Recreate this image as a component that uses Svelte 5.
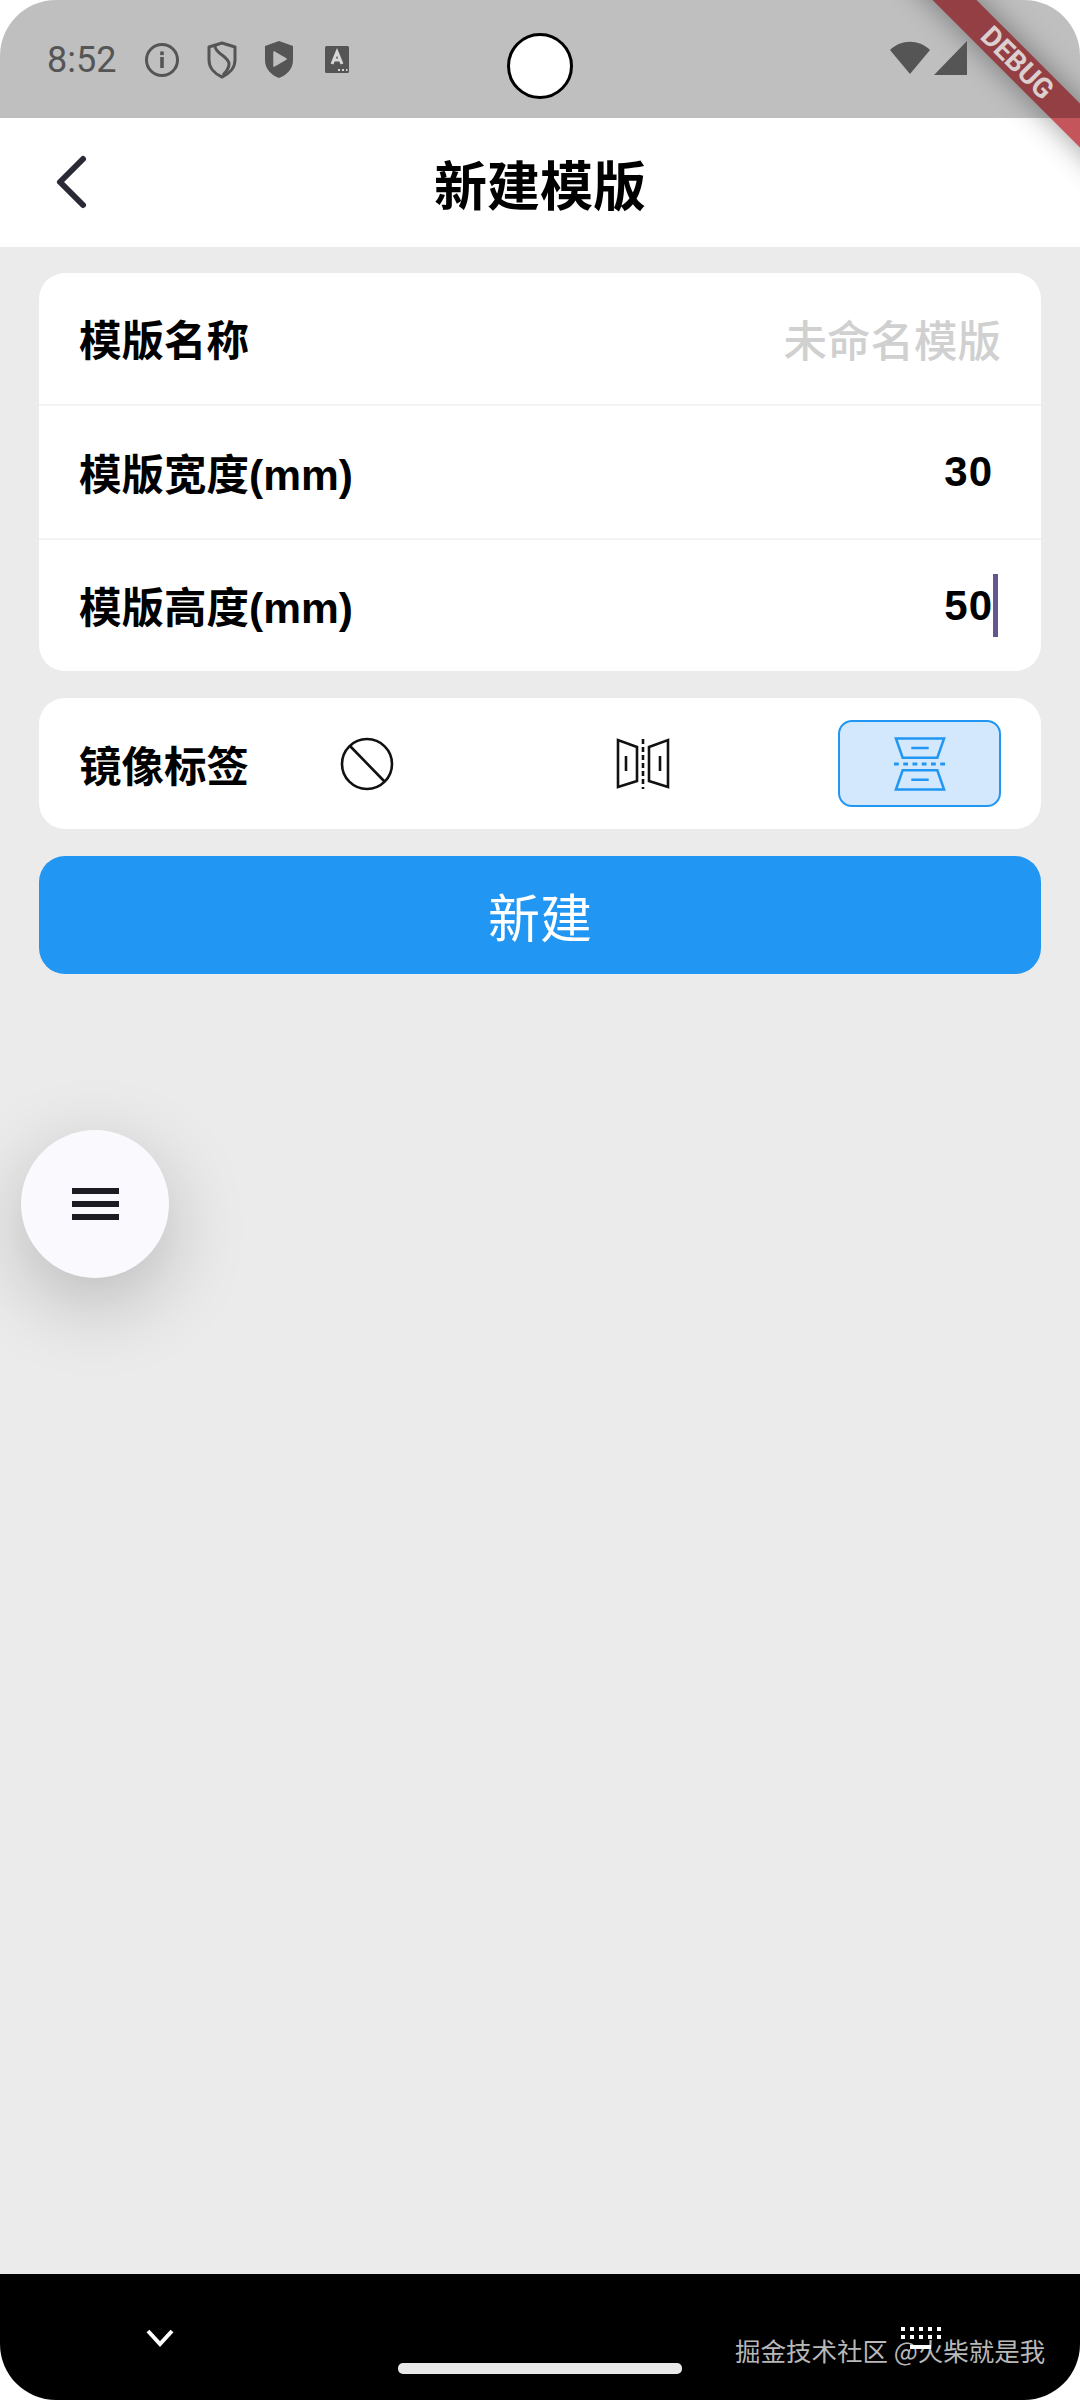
<script lang="ts">
  const fields = [
    { label: "模版名称", placeholder: "未命名模版" },
    { label: "模版宽度(mm)", value: "30" },
    { label: "模版高度(mm)", value: "50", focused: true }
  ];
</script>

<div class="screen">
  <div class="statusbar">
    <span class="time">8:52</span>
    <div class="status-icons">
      <svg width="36" height="36" viewBox="0 0 36 36">
        <circle cx="18" cy="18" r="15.5" fill="none" stroke="#555" stroke-width="3" />
        <rect x="16.2" y="15" width="3.6" height="11" fill="#555" />
        <rect x="16.2" y="9.5" width="3.6" height="3.6" fill="#555" />
      </svg>
      <svg width="30" height="38" viewBox="0 0 30 38">
        <path d="M15 2 L28 6 V19 C28 27 22 33 15 36 C8 33 2 27 2 19 V6 Z" fill="none" stroke="#555" stroke-width="3" stroke-linejoin="round" />
        <path d="M8 5 C8 13 22 15 22 23 C22 27 19 31 16 34" fill="none" stroke="#555" stroke-width="3" />
      </svg>
      <svg width="30" height="38" viewBox="0 0 30 38">
        <path d="M15 0 L29 5 V19 C29 28 23 34 15 37 C7 34 1 28 1 19 V5 Z" fill="#555" />
        <path d="M10 11 L22 18 L10 25 Z" fill="#bfbfbf" stroke="#bfbfbf" stroke-width="1.5" stroke-linejoin="round" />
      </svg>
      <svg class="a-icon" width="24" height="28" viewBox="0 0 24 28">
        <rect width="24" height="27" rx="1.5" fill="#555" />
        <path d="M7 18 L12 6 L17 18 M8.8 14 H15.2" fill="none" stroke="#d8d8d8" stroke-width="3" />
        <path d="M13 24 H15 M17 24 H19 M21 24 H22.5" stroke="#d8d8d8" stroke-width="2" />
      </svg>
    </div>
    <div class="camera"></div>
    <div class="signal">
      <svg width="40" height="34" viewBox="0 0 40 34">
        <path d="M0 9 C11 -2 29 -2 40 9 L20 33 Z" fill="#555" />
      </svg>
      <svg width="33" height="34" viewBox="0 0 33 34">
        <path d="M33 0 V34 H0 Z" fill="#555" />
      </svg>
    </div>
  </div>

  <header class="appbar">
    <svg class="back" width="40" height="56" viewBox="0 0 40 56">
      <path d="M31 5 L8 28 L31 51" fill="none" stroke="#2a2a35" stroke-width="6" stroke-linecap="round" stroke-linejoin="round" />
    </svg>
    <h1>新建模版</h1>
  </header>

  <main>
    <section class="card">
      {#each fields as f}
        <div class="row">
          <span class="label">{f.label}</span>
          {#if f.placeholder}
            <span class="placeholder">{f.placeholder}</span>
          {:else}
            <span class="value">{f.value}{#if f.focused}<i class="caret"></i>{/if}</span>
          {/if}
        </div>
      {/each}
    </section>

    <section class="card mirror">
      <span class="label mirror-label">镜像标签</span>
      <div class="options">
        <div class="option">
          <svg width="54" height="54" viewBox="0 0 54 54" fill="none" stroke="#111" stroke-width="2.6">
            <circle cx="27" cy="27" r="25" />
            <path d="M10 9 L45 45" />
          </svg>
        </div>
        <div class="option">
          <svg width="54" height="52" viewBox="0 0 54 52" fill="none" stroke="#111" stroke-width="2.6">
            <path d="M21 9 L2 2 V49 L21 43 Z" />
            <path d="M33 9 L52 2 V49 L33 43 Z" />
            <path d="M10 18 V33 M44 18 V33" />
            <path d="M27 1 V51" stroke-dasharray="5 3" />
          </svg>
        </div>
        <div class="option selected">
          <svg width="52" height="55" viewBox="0 0 54 56" fill="none" stroke="#2196f3" stroke-width="2.6">
            <path d="M2 2 H52 L45 22 H9 Z" />
            <path d="M9 35 H45 L52 55 H2 Z" />
            <path d="M18 12 H36 M18 45 H36" />
            <path d="M0 28.5 H54" stroke-width="3" stroke-dasharray="5 4.6" />
          </svg>
        </div>
      </div>
    </section>

    <button class="create">新建</button>
  </main>

  <nav class="navbar">
    <svg class="hide-kb" width="30" height="20" viewBox="0 0 30 20">
      <path d="M3 3 L15 16 L27 3" fill="none" stroke="#fff" stroke-width="4" />
    </svg>
    <div class="pill"></div>
    <span class="watermark">掘金技术社区 @火柴就是我</span>
    <svg class="kb" width="42" height="24" viewBox="0 0 42 24">
      <path d="M1 3 H41 M1 11 H41" stroke="#fff" stroke-width="4" stroke-dasharray="4 5" />
      <path d="M10 21 H31" stroke="#fff" stroke-width="4" />
    </svg>
  </nav>

  <div class="ribbon"></div>
  <span class="ribbon-text">DEBUG</span>

  <button class="fab" aria-label="菜单">
    <span></span><span></span><span></span>
  </button>
</div>

<style>
  :global(body) {
    background: #fff;
  }
  .screen {
    position: relative;
    width: 1080px;
    height: 2400px;
    display: flex;
    flex-direction: column;
    overflow: hidden;
    background: #fff;
    border-radius: 56px;
    font-family: "Liberation Sans", "Noto Sans CJK SC", sans-serif;
  }

  .statusbar {
    position: relative;
    z-index: 3;
    height: 118px;
    flex: none;
    display: flex;
    align-items: center;
    justify-content: space-between;
    padding: 0 113px 0 47px;
    box-sizing: border-box;
    background: rgba(0, 0, 0, 0.25);
  }
  .time {
    font: 400 36px Roboto, sans-serif;
    color: #555;
    margin-right: 28px;
    margin-top: 2px;
  }
  .status-icons {
    display: flex;
    align-items: center;
    gap: 27px;
    flex: 1;
    margin-top: 2px;
  }
  .a-icon {
    margin-left: 4px;
  }
  .camera {
    position: absolute;
    left: 507px;
    top: 33px;
    width: 66px;
    height: 66px;
    box-sizing: border-box;
    border: 3px solid #000;
    border-radius: 50%;
    background: #fff;
  }
  .signal {
    display: flex;
    align-items: flex-end;
    gap: 4px;
    margin-top: -2px;
  }

  .appbar {
    position: relative;
    height: 129px;
    flex: none;
    display: flex;
    align-items: center;
    justify-content: center;
    background: #fff;
  }
  .back {
    position: absolute;
    left: 52px;
    top: 36px;
  }
  h1 {
    margin: 0;
    font: 700 53px "Noto Sans CJK SC", sans-serif;
    color: #000;
  }

  main {
    flex: 1;
    display: flex;
    flex-direction: column;
    gap: 27px;
    padding: 26px 39px;
    background: #ebebeb;
  }
  .card {
    background: #fff;
    border-radius: 26px;
    overflow: hidden;
  }
  .row {
    height: 134px;
    box-sizing: border-box;
    display: flex;
    align-items: center;
    justify-content: space-between;
    padding: 0 40px;
    border-bottom: 2px solid #f3f3f3;
  }
  .row:first-child {
    height: 133px;
  }
  .row:last-child {
    height: 131px;
    border-bottom: 0;
  }
  .row .label {
    margin-top: -2px;
  }
  .label {
    font-size: 42.5px;
    font-weight: 700;
    color: #000;
  }
  .placeholder {
    font: 500 43.5px "Noto Sans CJK SC", sans-serif;
    color: #d0d0d0;
  }
  .value {
    position: relative;
    font-size: 42px;
    font-weight: 700;
    letter-spacing: 1px;
    color: #000;
    padding-right: 8px;
  }
  .caret {
    position: absolute;
    right: 3px;
    top: -8px;
    width: 5px;
    height: 63px;
    background: #65558f;
  }

  .mirror {
    height: 131px;
    flex: none;
    display: flex;
    align-items: center;
    padding: 0 40px;
  }
  .mirror-label {
    width: 206px;
    flex: none;
  }
  .options {
    flex: 1;
    display: flex;
    justify-content: space-between;
  }
  .option {
    width: 163px;
    height: 87px;
    box-sizing: border-box;
    display: flex;
    align-items: center;
    justify-content: center;
    border-radius: 14px;
  }
  .selected {
    border: 2.5px solid #2196f3;
    background: #d3e8fc;
  }

  .create {
    height: 118px;
    flex: none;
    border: 0;
    border-radius: 26px;
    background: #2196f3;
    color: #fff;
    font: 400 52px "Noto Sans CJK SC", sans-serif;
  }

  .navbar {
    position: relative;
    height: 126px;
    flex: none;
    background: #000;
  }
  .hide-kb {
    position: absolute;
    left: 145px;
    top: 54px;
  }
  .pill {
    position: absolute;
    left: 398px;
    top: 89px;
    width: 284px;
    height: 11px;
    border-radius: 5px;
    background: #e8e8e8;
  }
  .kb {
    position: absolute;
    left: 900px;
    top: 52px;
  }
  .watermark {
    position: absolute;
    left: 735px;
    top: 57px;
    font: 400 25.5px "Noto Sans CJK SC", sans-serif;
    color: #b8b8b8;
    white-space: nowrap;
  }

  .ribbon {
    position: absolute;
    z-index: 2;
    top: 47px;
    left: 867px;
    width: 300px;
    height: 31px;
    transform: rotate(45deg);
    background: #c4555a;
    box-shadow: 0 0 30px rgba(0, 0, 0, 0.4);
  }
  .ribbon-text {
    position: absolute;
    z-index: 4;
    top: 46px;
    left: 917px;
    width: 200px;
    height: 34px;
    transform: rotate(45deg);
    text-align: center;
    font: 700 28px/34px Roboto, sans-serif;
    color: #dccfcf;
  }

  .fab {
    position: absolute;
    z-index: 5;
    left: 21px;
    top: 1130px;
    width: 148px;
    height: 148px;
    border: 0;
    border-radius: 50%;
    background: #f9f9fe;
    box-shadow: 0 24px 80px rgba(0, 0, 0, 0.22);
    display: flex;
    flex-direction: column;
    align-items: center;
    justify-content: center;
    gap: 7.5px;
  }
  .fab span {
    width: 47px;
    height: 5.5px;
    background: #1c1b23;
  }
</style>
